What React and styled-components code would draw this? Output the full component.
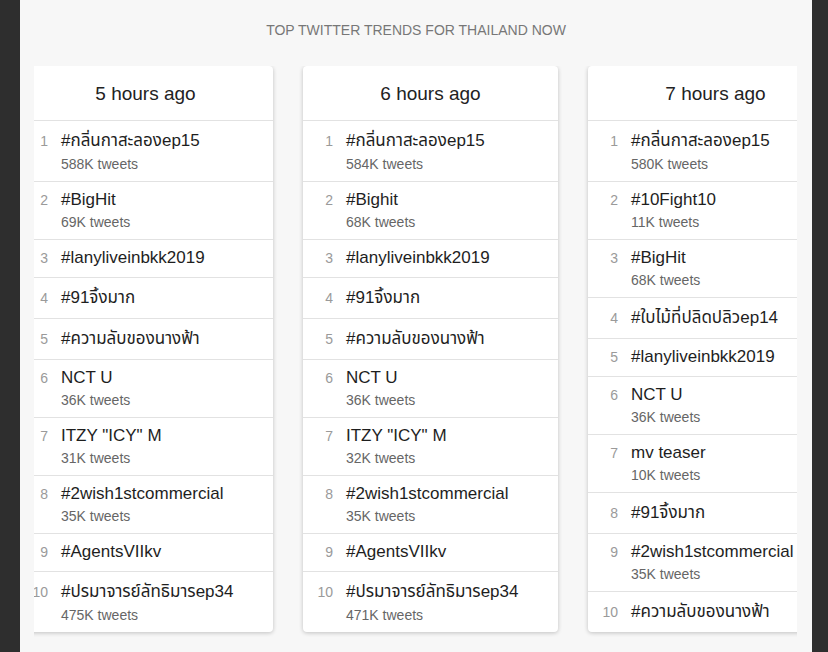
import React from 'react';
import styled, { createGlobalStyle } from 'styled-components';

const GlobalStyle = createGlobalStyle`
  html, body {
    margin: 0;
    padding: 0;
    background: #2e2e2e;
  }
  body {
    font-family: "Liberation Sans", "Noto Sans Thai", "Noto Sans", sans-serif;
    -webkit-font-smoothing: antialiased;
  }
`;

const trends = [
  {
    when: '5 hours ago',
    items: [
      ['#กลิ่นกาสะลองep15', '588K'],
      ['#BigHit', '69K'],
      ['#lanyliveinbkk2019'],
      ['#91จิ้งมาก'],
      ['#ความลับของนางฟ้า'],
      ['NCT U', '36K'],
      ['ITZY "ICY" M', '31K'],
      ['#2wish1stcommercial', '35K'],
      ['#AgentsVIIkv'],
      ['#ปรมาจารย์ลัทธิมารep34', '475K'],
    ],
  },
  {
    when: '6 hours ago',
    items: [
      ['#กลิ่นกาสะลองep15', '584K'],
      ['#Bighit', '68K'],
      ['#lanyliveinbkk2019'],
      ['#91จิ้งมาก'],
      ['#ความลับของนางฟ้า'],
      ['NCT U', '36K'],
      ['ITZY "ICY" M', '32K'],
      ['#2wish1stcommercial', '35K'],
      ['#AgentsVIIkv'],
      ['#ปรมาจารย์ลัทธิมารep34', '471K'],
    ],
  },
  {
    when: '7 hours ago',
    items: [
      ['#กลิ่นกาสะลองep15', '580K'],
      ['#10Fight10', '11K'],
      ['#BigHit', '68K'],
      ['#ใบไม้ที่ปลิดปลิวep14'],
      ['#lanyliveinbkk2019'],
      ['NCT U', '36K'],
      ['mv teaser', '10K'],
      ['#91จิ้งมาก'],
      ['#2wish1stcommercial', '35K'],
      ['#ความลับของนางฟ้า'],
    ],
  },
];

const isThai = s => /[\u0E00-\u0E7F]/.test(s);

const Page = styled.main`
  margin: 0 16px 0 20px;
  min-height: 652px;
  padding-top: 22px;
  box-sizing: border-box;
  background: #f7f7f7;
`;

const Heading = styled.h1`
  margin: 0 0 28px;
  text-align: center;
  font-size: 14px;
  line-height: 16px;
  font-weight: normal;
  color: #777;
`;

const Viewport = styled.div`
  margin: 0 15px 0 14px;
  padding-bottom: 20px;
  overflow: hidden;
`;

// content is scrolled a little to the right
const Track = styled.div`
  display: flex;
  gap: 30px;
  margin-left: -16px;
`;

const Card = styled.section`
  flex: 0 0 255px;
  background: #fff;
  border-radius: 4px;
  box-shadow: 0 1px 4px rgba(0, 0, 0, .22);
`;

const CardHeader = styled.h2`
  margin: 0;
  height: 54px;
  padding-top: 2px;
  box-sizing: border-box;
  display: flex;
  align-items: center;
  justify-content: center;
  font-size: 19px;
  font-weight: normal;
  color: #222;
  border-bottom: 1px solid #e2e2e2;
  height: 55px;
`;

const List = styled.ol`
  list-style: none;
  margin: 0;
  padding: 0;
`;

const Row = styled.li`
  display: grid;
  grid-template-columns: 30px 1fr;
  column-gap: 13px;
  align-items: baseline;
  padding: 8px 6px 9px 0;
  border-bottom: 1px solid #e2e2e2;
  &:last-child {
    border-bottom: none;
  }
`;

const Rank = styled.span`
  text-align: right;
  font-size: 14px;
  color: #9a9a9a;
`;

const Name = styled.span`
  font-size: 17px;
  line-height: ${p => (p.$thai ? '23px' : '20px')};
  color: #1e1e1e;
  white-space: nowrap;
`;

const Count = styled.span`
  grid-column: 2;
  margin-top: 4px;
  font-size: 14px;
  line-height: 16px;
  color: #666;
`;

const TrendCard = ({ when, items }) => (
  <Card>
    <CardHeader>{when}</CardHeader>
    <List>
      {items.map(([name, count], i) => (
        <Row key={i}>
          <Rank>{i + 1}</Rank>
          <Name $thai={isThai(name)}>{name}</Name>
          {count && <Count>{count} tweets</Count>}
        </Row>
      ))}
    </List>
  </Card>
);

const App = () => (
  <>
    <GlobalStyle />
    <Page>
      <Heading>TOP TWITTER TRENDS FOR THAILAND NOW</Heading>
      <Viewport>
        <Track>
          {trends.map(t => <TrendCard key={t.when} {...t} />)}
        </Track>
      </Viewport>
    </Page>
  </>
);

export default App;
